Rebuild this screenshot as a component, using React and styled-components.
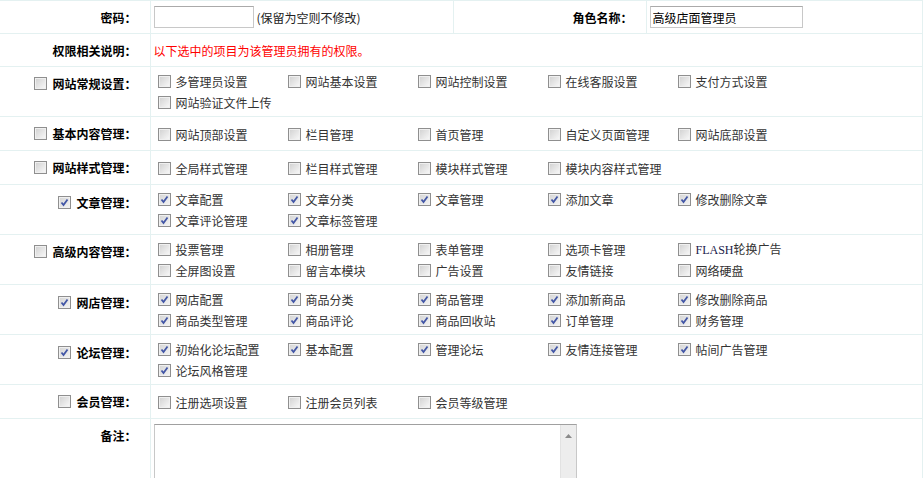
import React from 'react'
import styled, { createGlobalStyle } from 'styled-components';

const LINE = '#e4f1f1';

const GlobalStyle = createGlobalStyle`
    html, body {
        margin: 0;
        padding: 0;
        background: #fff;
    }
    body {
        font-family: "Noto Sans CJK SC", "Liberation Sans", sans-serif;
        font-size: 12px;
        color: #333;
    }
`;

const groups = [
    { title: '网站常规设置', checked: false, items: ['多管理员设置', '网站基本设置', '网站控制设置', '在线客服设置', '支付方式设置', '网站验证文件上传'] },
    { title: '基本内容管理', checked: false, items: ['网站顶部设置', '栏目管理', '首页管理', '自定义页面管理', '网站底部设置'] },
    { title: '网站样式管理', checked: false, items: ['全局样式管理', '栏目样式管理', '模块样式管理', '模块内容样式管理'] },
    { title: '文章管理', checked: true, items: ['文章配置', '文章分类', '文章管理', '添加文章', '修改删除文章', '文章评论管理', '文章标签管理'] },
    { title: '高级内容管理', checked: false, items: ['投票管理', '相册管理', '表单管理', '选项卡管理', 'FLASH轮换广告', '全屏图设置', '留言本模块', '广告设置', '友情链接', '网络硬盘'] },
    { title: '网店管理', checked: true, items: ['网店配置', '商品分类', '商品管理', '添加新商品', '修改删除商品', '商品类型管理', '商品评论', '商品回收站', '订单管理', '财务管理'] },
    { title: '论坛管理', checked: true, items: ['初始化论坛配置', '基本配置', '管理论坛', '友情连接管理', '帖间广告管理', '论坛风格管理'] },
    { title: '会员管理', checked: false, items: ['注册选项设置', '注册会员列表', '会员等级管理'] },
];

function Check({ checked }) {
    return (
        <Box $checked={checked}>
            {checked && (
                <svg width="9" height="9" viewBox="0 0 9 9">
                    <path d="M1.5 4.5 L3.5 7 L7.5 1.5" fill="none" stroke="#4256a6" strokeWidth="1.8" />
                </svg>
            )}
        </Box>
    );
}

function ItemText({ text }) {
    if (text.startsWith('FLASH')) {
        return <span><Latin>FLASH</Latin>{text.slice(5)}</span>;
    }
    return <span>{text}</span>;
}

function App() {
  return (
    <>
        <GlobalStyle />
        <Table>
            <colgroup>
                <Col $w={150} />
                <Col $w={303} />
                <Col $w={193} />
                <Col $w={276} />
            </colgroup>
            <tbody>
                <tr>
                    <Label>密码：</Label>
                    <Value>
                        <Inline>
                            <Input type="password" $w={100} />
                            <Hint>(保留为空则不修改)</Hint>
                        </Inline>
                    </Value>
                    <Label>角色名称：</Label>
                    <Value><Input $w={153} defaultValue="高级店面管理员" /></Value>
                </tr>
                <tr>
                    <Label>权限相关说明：</Label>
                    <Value colSpan={3}><Notice>以下选中的项目为该管理员拥有的权限。</Notice></Value>
                </tr>
                {groups.map((g) => (
                    <tr key={g.title}>
                        <Label>
                            <GroupHead>
                                <Check checked={g.checked} />
                                {g.title}：
                            </GroupHead>
                        </Label>
                        <Value colSpan={3} $list>
                            <ItemList>
                                {g.items.map((it) => (
                                    <Item key={it}>
                                        <Check checked={g.checked} />
                                        <ItemText text={it} />
                                    </Item>
                                ))}
                            </ItemList>
                        </Value>
                    </tr>
                ))}
                <tr>
                    <Label>备注：</Label>
                    <Value colSpan={3} $top>
                        <AreaWrap>
                            <Area />
                            <Scroll>
                                <svg width="7" height="4" viewBox="0 0 7 4">
                                    <path d="M3.5 0 L7 4 L0 4 Z" fill="#8a8a8a" />
                                </svg>
                            </Scroll>
                        </AreaWrap>
                    </Value>
                </tr>
            </tbody>
        </Table>
    </>
  )
}

export default App;

const Table = styled.table`
    width: 922px;
    border-collapse: collapse;
    border-top: 1px solid ${LINE};
    border-right: 1px solid ${LINE};
    table-layout: fixed;
`;

const Col = styled.col`
    width: ${(p) => p.$w}px;
`;

const Label = styled.th`
    box-sizing: border-box;
    text-align: right;
    vertical-align: top;
    padding: 6px 13px 5px 0;
    line-height: 21px;
    font-weight: bold;
    color: #000;
    white-space: nowrap;
    border-bottom: 1px solid ${LINE};
    border-right: 1px solid ${LINE};
`;

const Value = styled.td`
    vertical-align: ${(p) => (p.$top ? 'top' : 'middle')};
    padding: ${(p) => (p.$list ? '4px 3px 3px' : '0 3px')};
    line-height: 21px;
    border-bottom: 1px solid ${LINE};
    border-right: 1px solid ${LINE};
`;

const Inline = styled.div`
    display: flex;
    align-items: center;
`;

const Input = styled.input`
    width: ${(p) => p.$w}px;
    height: 22px;
    box-sizing: border-box;
    margin: 0;
    padding: 0 2px;
    border: 1px solid #c8c8c8;
    border-top-color: #aaa;
    font-family: "Noto Sans CJK SC", sans-serif;
    font-size: 12px;
    color: #000;
    outline: none;
`;

const Hint = styled.span`
    margin-left: 3px;
    color: #222;
`;

const Notice = styled.span`
    color: #ff0000;
`;

const GroupHead = styled.span`
    display: inline-flex;
    align-items: center;
    gap: 5px;
`;

const ItemList = styled.div`
    display: flex;
    flex-wrap: wrap;
    width: 650px;
`;

const Item = styled.label`
    width: 130px;
    height: 21px;
    display: flex;
    align-items: center;
    gap: 5px;
    padding-left: 4px;
    box-sizing: border-box;
    color: #333;
    white-space: nowrap;
`;

const Box = styled.span`
    width: 13px;
    height: 13px;
    box-sizing: border-box;
    flex: none;
    display: inline-flex;
    align-items: center;
    justify-content: center;
    border: 1px solid #8f8f8f;
    background: ${(p) => (p.$checked
        ? 'linear-gradient(135deg, #d4d4d4 0%, #f4f4f4 100%)'
        : 'linear-gradient(135deg, #d0d0d0 0%, #fafafa 100%)')};
    box-shadow: inset 0 0 0 1px #f0f0f0;
`;

const Latin = styled.span`
    font-family: "Liberation Serif", serif;
    color: #1a1a4a;
`;

const AreaWrap = styled.div`
    display: flex;
    width: 423px;
    height: 90px;
    margin-top: 5px;
    border: 1px solid #c8c8c8;
    border-top-color: #a0a0a0;
    box-sizing: border-box;
`;

const Area = styled.textarea`
    flex: 1;
    border: none;
    resize: none;
    outline: none;
    overflow: hidden;
    font-family: "Noto Sans CJK SC", sans-serif;
    font-size: 12px;
`;

const Scroll = styled.div`
    width: 16px;
    background: #ededed;
    border-left: 1px solid #e2e2e2;
    display: flex;
    justify-content: center;
    padding-top: 9px;
    box-sizing: border-box;
`;
